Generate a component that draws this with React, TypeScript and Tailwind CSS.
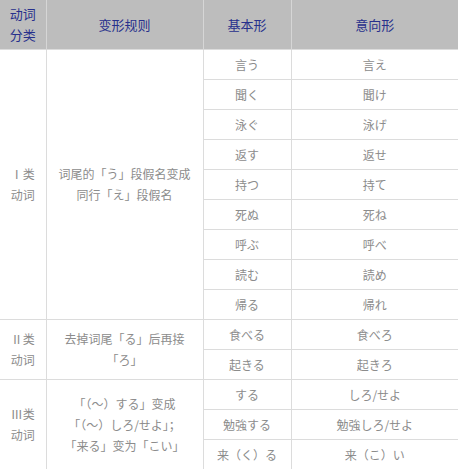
const groups = [
  {
    type: ["Ⅰ类", "动词"],
    rule: ["词尾的「う」段假名变成", "同行「え」段假名"],
    rows: [
      ["言う", "言え"],
      ["聞く", "聞け"],
      ["泳ぐ", "泳げ"],
      ["返す", "返せ"],
      ["持つ", "持て"],
      ["死ぬ", "死ね"],
      ["呼ぶ", "呼べ"],
      ["読む", "読め"],
      ["帰る", "帰れ"],
    ],
  },
  {
    type: ["Ⅱ类", "动词"],
    rule: ["去掉词尾「る」后再接", "「ろ」"],
    rows: [
      ["食べる", "食べろ"],
      ["起きる", "起きろ"],
    ],
  },
  {
    type: ["Ⅲ类", "动词"],
    rule: ["「（～）する」变成", "「（～）しろ/せよ」；", "「来る」变为「こい」"],
    rows: [
      ["する", "しろ/せよ"],
      ["勉強する", "勉強しろ/せよ"],
      ["来（く）る", "来（こ）い"],
    ],
  },
];

const Lines = ({ lines }: { lines: string[] }) => (
  <>
    {lines.map((l, i) => (
      <div key={i}>{l}</div>
    ))}
  </>
);

export default function App() {
  return (
    <div
      className="w-[458px] h-[469px] overflow-hidden bg-white"
      style={{ fontFamily: '"Noto Sans CJK SC", "Noto Sans", sans-serif' }}
    >
      <table className="w-[458px] table-fixed border-collapse text-center">
        <colgroup>
          <col className="w-[46px]" />
          <col className="w-[157px]" />
          <col className="w-[88px]" />
          <col className="w-[167px]" />
        </colgroup>
        <thead>
          <tr className="bg-[#bdbdbd] text-[#27308c] text-[13px] leading-[21px]">
            <th className="h-[49px] font-normal border-r border-[#d6d6d6] p-0">
              <div>动词</div>
              <div>分类</div>
            </th>
            <th className="font-normal border-r border-[#d6d6d6] p-0">变形规则</th>
            <th className="font-normal border-r border-[#d6d6d6] p-0">基本形</th>
            <th className="font-normal p-0">意向形</th>
          </tr>
        </thead>
        <tbody className="text-[12px] text-[#8c8c8c] leading-[21px]">
          {groups.map((g) =>
            g.rows.map((r, i) => (
              <tr key={g.type[0] + i}>
                {i === 0 && (
                  <>
                    <td
                      rowSpan={g.rows.length}
                      className="border-r border-t border-[#dcdcdc] p-0"
                    >
                      <Lines lines={g.type} />
                    </td>
                    <td
                      rowSpan={g.rows.length}
                      className="border-r border-t border-[#dcdcdc] p-0"
                    >
                      <Lines lines={g.rule} />
                    </td>
                  </>
                )}
                <td className="h-[30px] border-r border-t border-[#dcdcdc] p-0">{r[0]}</td>
                <td className="border-t border-[#dcdcdc] p-0">{r[1]}</td>
              </tr>
            ))
          )}
        </tbody>
      </table>
    </div>
  );
}
